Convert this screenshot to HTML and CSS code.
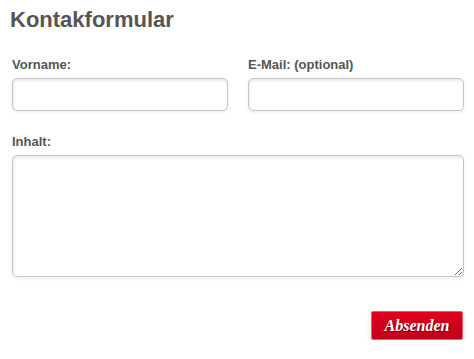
FILE: index.html
```html
<!DOCTYPE html>
<html lang="de">
<head>
<meta charset="utf-8">
<link rel="stylesheet" href="styles.css">
</head>
<body>
<form class="form">
  <h1 class="title">Kontakformular</h1>
  <div class="row">
    <div class="field">
      <label class="label">Vorname:</label>
      <input class="input" type="text">
    </div>
    <div class="field">
      <label class="label">E-Mail: (optional)</label>
      <input class="input" type="text">
    </div>
  </div>
  <div class="field field-full">
    <label class="label">Inhalt:</label>
    <textarea class="textarea"></textarea>
  </div>
  <div class="actions">
    <button class="submit" type="button">Absenden</button>
  </div>
</form>
</body>
</html>
```
FILE: styles.css
```css
html, body {
  margin: 0;
  padding: 0;
  background: #fff;
}
body {
  font-family: "Liberation Sans", Arial, sans-serif;
  color: #555;
}
.form {
  padding: 0 10px 0 12px;
}
.title {
  margin: 0 0 0 -2px;
  padding-top: 7px;
  font-size: 22px;
  line-height: 25px;
  font-weight: bold;
  color: #555;
}
.row {
  display: grid;
  grid-template-columns: 1fr 1fr;
  gap: 20px;
  margin-top: 25px;
}
.field {
  display: flex;
  flex-direction: column;
}
.field-full {
  margin-top: 23px;
}
.label {
  font-size: 13px;
  line-height: 15px;
  font-weight: bold;
  color: #555;
  margin-bottom: 6px;
}
.input, .textarea {
  box-sizing: border-box;
  border: 1px solid #c6c6c6;
  border-radius: 5px;
  background: #fff;
  box-shadow: inset 1px 2px 3px rgba(0,0,0,0.09), 0 2px 4px rgba(0,0,0,0.06);
  font: 13px "Liberation Sans", Arial, sans-serif;
  margin: 0;
  outline: none;
}
.input {
  height: 33px;
}
.textarea {
  display: block;
  height: 122px;
  resize: vertical;
}
.actions {
  display: flex;
  justify-content: flex-end;
  margin-top: 34px;
}
.submit {
  box-sizing: border-box;
  width: 92px;
  height: 29px;
  margin-right: 1px;
  padding: 0;
  border: 1px solid #ef5a6e;
  border-radius: 2px;
  background: linear-gradient(#e0001d, #c2001c);
  box-shadow: 0 4px 6px rgba(0,0,0,0.12);
  color: #fff;
  font-family: "Liberation Serif", Georgia, serif;
  font-style: italic;
  font-weight: bold;
  font-size: 16px;
  text-shadow: 1px 1px 1px rgba(60,0,20,0.7);
  cursor: pointer;
}
```
